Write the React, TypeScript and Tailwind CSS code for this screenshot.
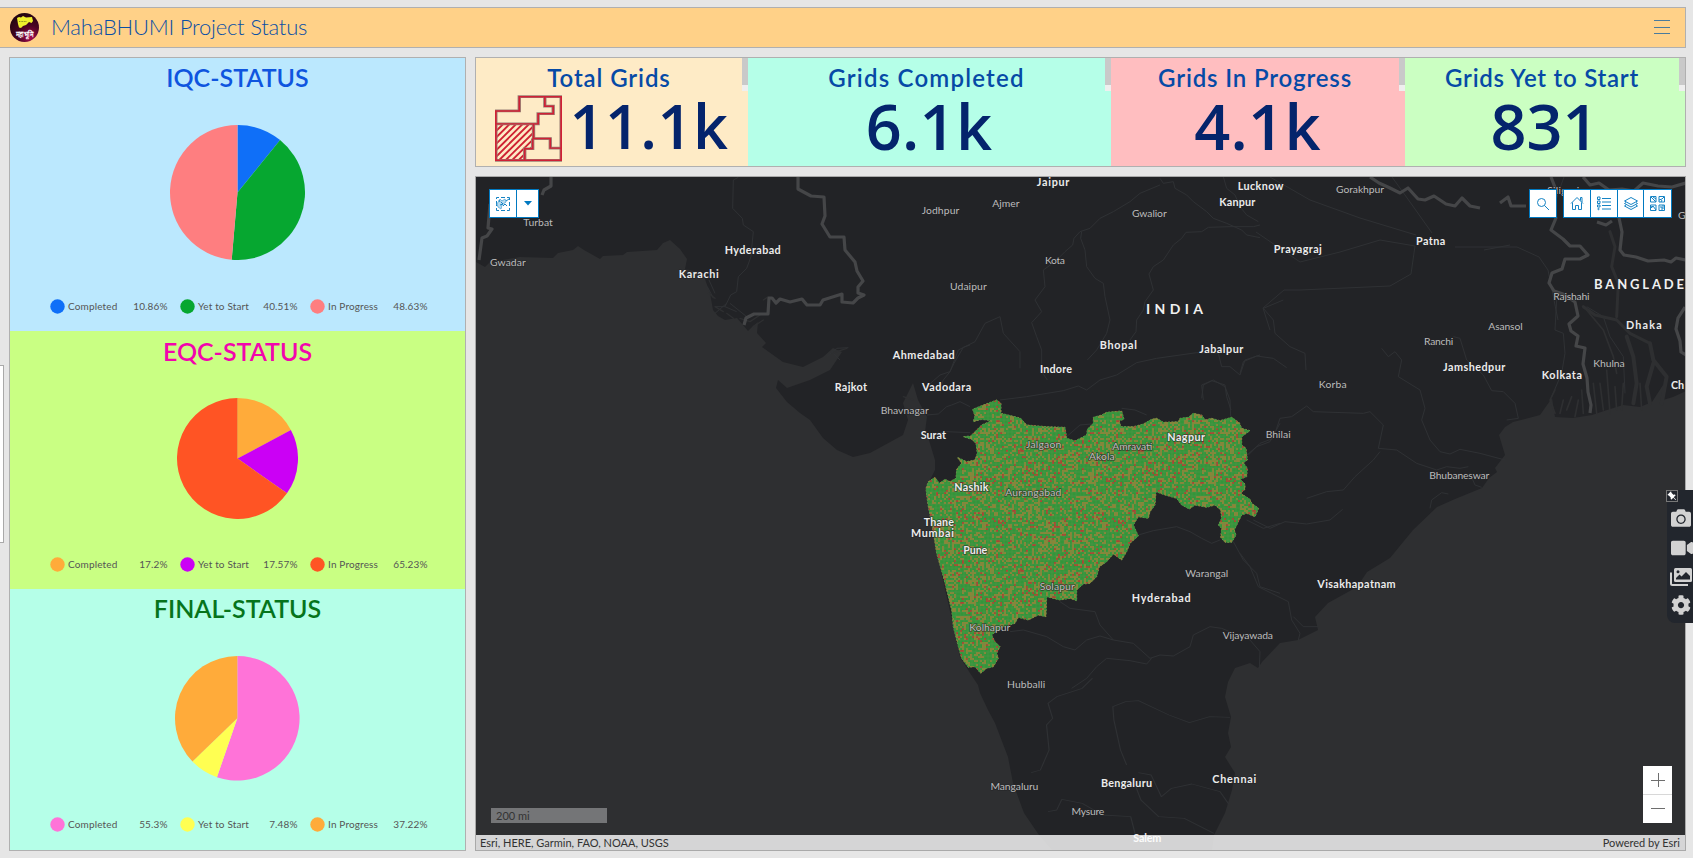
import React from "react";
import { FaCamera, FaVideo, FaCog } from "react-icons/fa";
import { BsPinAngleFill } from "react-icons/bs";

type Slice = { label: string; value: number; color: string };

function Pie({ slices, radius }: { slices: Slice[]; radius: number }) {
  let acc = 0;
  const point = (p: number) => {
    const a = (p / 100) * Math.PI * 2;
    return `${100 + 100 * Math.sin(a)} ${100 - 100 * Math.cos(a)}`;
  };
  return (
    <svg width={radius * 2} height={radius * 2} viewBox="0 0 200 200">
      {slices.map((s) => {
        const from = acc;
        acc += s.value;
        return (
          <path
            key={s.label}
            fill={s.color}
            d={`M100 100L${point(from)}A100 100 0 ${s.value > 50 ? 1 : 0} 1 ${point(acc)}Z`}
          />
        );
      })}
    </svg>
  );
}

function StatusPanel(props: {
  title: string;
  className: string;
  titleClass: string;
  slices: Slice[];
  radius: number;
}) {
  return (
    <section className={"flex flex-col items-center " + props.className}>
      <h2 className={"shrink-0 text-[25px] font-semibold whitespace-nowrap " + props.titleClass}>
        {props.title}
      </h2>
      <div className="flex min-h-0 flex-1 items-center justify-center">
        <Pie slices={props.slices} radius={props.radius} />
      </div>
      <ul className="ml-[2px] flex h-5 w-[378px] items-center gap-3 text-[10px] text-[#555]">
        {props.slices.map((s) => (
          <li key={s.label} className="flex w-[118px] shrink-0 items-center">
            <svg width="15" height="15" viewBox="0 0 15 15">
              <circle cx="7.5" cy="7.5" r="7.2" fill={s.color} />
            </svg>
            <span className="mt-px ml-[3.5px] flex-1 tracking-[0.15px] whitespace-nowrap">{s.label}</span>
            <span className="mt-px tracking-[0.1px] whitespace-nowrap">{s.value}%</span>
          </li>
        ))}
      </ul>
    </section>
  );
}

const HATCH = Array.from({ length: 13 }, (_, i) => `M${-86 + i * 15.5} 195l92 -112`).join("");
const PARCELS = "M58 5H158V192H2V47H58ZM119 5V33H139V55H103V85H2M92 85V128H132V156H158M90 128V158H71V192";

function ParcelIcon() {
  return (
    <svg width="67" height="67" viewBox="0 0 160 197" preserveAspectRatio="none" fill="none">
      <defs>
        <clipPath id="hatch">
          <path d="M4 85H92V130H88V158H70V193H4Z" />
        </clipPath>
      </defs>
      <path clipPath="url(#hatch)" stroke="#cf2233" strokeWidth="5" d={HATCH} />
      <path stroke="#9a8176" strokeWidth="8" d={PARCELS} />
      <path stroke="#d02035" strokeWidth="4" d={PARCELS} />
    </svg>
  );
}

function Indicator(props: {
  title: string;
  value: string;
  className: string;
  titleClass: string;
  valueClass: string;
  icon?: boolean;
}) {
  return (
    <div className={"relative flex flex-col items-center " + props.className}>
      <div className={"h-[37px] pr-[6px] text-[24px] leading-[39px] font-semibold whitespace-nowrap text-[#064aa6] " + props.titleClass}>
        {props.title}
      </div>
      <div className="flex h-[66px] items-center pr-px">
        {props.icon && <ParcelIcon />}
        <span className={"mb-1 font-['Open_Sans',sans-serif] leading-[60px] font-semibold whitespace-nowrap text-[#04246c] " + props.valueClass}>
          {props.value}
        </span>
      </div>
      <div className="absolute top-0 right-0 flex h-[33px] w-1.5 flex-col bg-[#efefef]">
        <div className="h-[27px] bg-[#c9c9c9]" />
      </div>
    </div>
  );
}

type Label = [string, number, number, number, number?];

const LABELS: Label[] = [
  ["Turbat", 523.3, 29.5, 225.3],
  ["Gwadar", 490, 35.7, 265.3],
  ["Hyderabad", 724.7, 56, 253.7, 1],
  ["Karachi", 678.7, 40, 277, 1],
  ["Jodhpur", 921.7, 37.6, 213.7],
  ["Ahmedabad", 892.7, 62, 358.3, 1],
  ["Rajkot", 834.7, 32.3, 390, 1],
  ["Vadodara", 922, 49.3, 389.8, 1],
  ["Bhavnagar", 880.7, 48, 413.3],
  ["Surat", 920.7, 25.3, 438, 1],
  ["Jaipur", 1036.7, 32.7, 185, 1],
  ["Ajmer", 992.3, 27.3, 206],
  ["Gwalior", 1132, 34.7, 216.3],
  ["Kanpur", 1219.3, 36, 205.7, 1],
  ["Kota", 1045, 20, 263.7],
  ["Udaipur", 950, 36.7, 289.7],
  ["Bhopal", 1099.7, 37.3, 348, 1],
  ["Jabalpur", 1199.3, 44, 352.3, 1],
  ["Indore", 1040, 32, 372, 1],
  ["Lucknow", 1237.7, 45.8, 189, 1],
  ["Gorakhpur", 1336, 48, 192],
  ["Prayagraj", 1273.8, 48, 252, 1],
  ["Patna", 1416, 29.3, 244.3, 1],
  ["Siliguri", 1547.3, 32, 193],
  ["G", 1678, 7, 218.5],
  ["Rajshahi", 1553.3, 36.3, 299],
  ["Dhaka", 1626, 35.7, 328.3, 1],
  ["Asansol", 1488.3, 34.3, 329.5],
  ["Ranchi", 1424, 29.3, 344],
  ["Jamshedpur", 1443, 62.3, 370, 1],
  ["Kolkata", 1541.7, 40.3, 378.7, 1],
  ["Khulna", 1593.3, 31.3, 366],
  ["Ch", 1671, 13, 388.7, 1],
  ["Korba", 1318.7, 28, 387.7],
  ["Bhilai", 1265.7, 25, 437.7],
  ["Bhubaneswar", 1429.3, 60, 478.3],
  ["Visakhapatnam", 1317.3, 78.3, 587.7, 1],
  ["Jalgaon", 1026, 35.3, 447],
  ["Akola", 1089, 25.7, 459.3],
  ["Amravati", 1112.3, 40, 449.7],
  ["Nagpur", 1167.3, 37.7, 440.5, 1],
  ["Nashik", 954.3, 34.3, 490, 1],
  ["Aurangabad", 1005.3, 56, 495.3],
  ["Thane", 923.7, 30.3, 525, 1],
  ["Mumbai", 911, 43, 536, 1],
  ["Pune", 963.3, 24, 553, 1],
  ["Solapur", 1039.7, 35, 589.7],
  ["Kolhapur", 969.3, 41, 630.3],
  ["Hyderabad", 1131.7, 59, 601.2, 1],
  ["Warangal", 1185.3, 43, 576.7],
  ["Vijayawada", 1222.7, 50.3, 638.7],
  ["Hubballi", 1007, 38.3, 687.3],
  ["Mangaluru", 990.4, 48, 789.5],
  ["Bengaluru", 1101, 51, 786.7, 1],
  ["Chennai", 1212.3, 43.9, 782.3, 1],
  ["Mysure", 1071.5, 32.7, 814],
  ["Salem", 1133.3, 28, 841.5, 1],
];

/* Survey grid cells: a repeating tile of 2px squares, coloured by status. */
const TILE = 60;
const CELL = 2;
function buildTile() {
  let seed = 20417;
  const rand = () => {
    seed = (seed * 1103515245 + 12345) % 2147483648;
    return seed / 2147483648;
  };
  let amber = "";
  let red = "";
  for (let y = 0; y < TILE; y++) {
    for (let x = 0; x < TILE; x++) {
      const v = rand();
      const cell = `M${x * CELL} ${y * CELL}h${CELL}v${CELL}h-${CELL}z`;
      if (v < 0.075) red += cell;
      else if (v < 0.4) amber += cell;
    }
  }
  return { amber, red };
}
const tile = buildTile();

const STATE =
  "80,345 78,325 85,305 105,292 118,310 135,298 150,305 168,295 170,268 185,250 172,232 200,245 225,240 232,220 228,190 215,178 190,170 212,168 230,150 245,135 275,122 245,118 220,125 225,108 218,88 250,75 290,60 303,70 303,100 345,110 362,115 380,135 440,140 495,142 500,175 525,183 560,165 562,148 580,130 580,112 605,105 620,97 665,93 672,118 658,122 662,140 700,140 730,132 755,118 770,115 790,127 835,125 840,115 865,112 880,100 905,105 915,120 935,115 960,122 995,112 1018,128 1025,145 1050,152 1025,170 1025,195 1038,205 1042,240 1030,248 1042,265 1040,290 1020,298 1035,312 1035,328 1022,340 1050,358 1055,370 1076,385 1065,410 1040,400 1025,405 1003,450 1008,465 995,487 975,487 962,472 965,445 955,435 965,415 962,390 945,375 920,382 885,375 868,387 845,375 830,355 795,345 768,335 765,375 750,395 745,415 715,410 700,435 715,468 690,490 680,515 665,540 640,522 620,545 598,560 590,590 570,610 550,612 530,630 530,662 510,655 480,660 440,650 438,710 415,705 385,720 355,712 345,730 300,745 275,765 285,785 300,800 290,820 295,835 280,860 260,865 242,880 225,860 205,862 185,835 175,800 160,740 155,690 145,650 130,590 110,520 102,470 95,430 85,380";

const WEST_SEA =
  "476,262 485,267 490,262 520,257 553,258 558,253 573,250 578,246 584,250 600,259 603,256 623,255 627,252 657,250 663,243 670,240 680,249 687,259 685,269 703,273 706,282 710,293 713,310 718,316 725,320 737,318 743,325 748,331 753,326 758,322 757,333 766,343 762,347 783,362 803,367 823,357 833,348 842,352 830,370 810,380 787,388 778,380 776,388 787,402 800,413 810,420 823,438 837,450 853,457 870,453 903,435 908,420 903,403 913,383 918,400 927,417 925,432 928,437 935,460 935,470 930,480 927,490 930,513 935,540 943,580 952,620 960,657 970,673 978,685 980,693 988,710 995,723 1008,757 1013,783 1024,813 1039,835 1052,850 476,850";

const EAST_SEA =
  "1212,850 1214,835 1225,813 1232,790 1235,773 1225,757 1231,747 1228,733 1231,717 1225,697 1228,682 1235,668 1250,663 1258,668 1262,662 1280,643 1298,640 1318,630 1315,617 1328,603 1357,587 1367,572 1390,558 1413,530 1437,507 1455,499 1482,488 1489,478 1497,472 1495,468 1505,455 1499,435 1505,427 1513,422 1540,415 1552,398 1555,417 1573,418 1592,415 1607,410 1623,405 1640,407 1652,402 1663,385 1663,400 1673,397 1686,391 1686,850";

function MapCanvas() {
  return (
    <svg className="block" width="1209" height="673" viewBox="476 177 1209 673" fill="none">
      <defs>
        <pattern id="cells" width="120" height="120" patternUnits="userSpaceOnUse">
          <rect width="120" height="120" fill="#33963a" />
          <path d={tile.amber} fill="#8c8538" />
          <path d={tile.red} fill="#ac4432" />
          <path
            d={Array.from({ length: 30 }, (_, i) => `M0 ${i * 4}H120M${i * 4} 0V120`).join("")}
            stroke="#5f8f4c"
            strokeWidth="0.6"
            opacity="0.6"
          />
        </pattern>
      </defs>
      <rect x="476" y="177" width="1209" height="673" fill="#222326" />
      <polygon points={WEST_SEA} fill="#2e2f31" />
      <polygon points={EAST_SEA} fill="#2e2f31" />

      {/* Rivers */}
      <g stroke="#2f3134" strokeWidth="1" strokeLinejoin="round">
        <g transform="translate(470 170) scale(.33333)" strokeWidth="3">
          <path d="M805 22L790 30L788 115L817 145L820 165L850 185L845 235L843 260L830 295L805 320L800 365L782 375L765 410L735 410M765 410L800 425M717 330L735 370M712 350L730 385M780 400L830 440M735 430L770 400" />
          <path d="M1500 525L1480 532L1452 580L1440 605L1420 630L1410 655" />
          <path d="M1370 735L1405 732L1430 710L1445 705L1470 695L1500 710" />
          <path d="M1375 795L1430 785L1500 788M1070 560L1100 535L1135 533M1085 545L1110 570" />
        </g>
        <g transform="translate(930 170) scale(.33333)" strokeWidth="3">
          <path d="M690 25L700 40L730 35L735 55L770 75L790 95L830 125L850 145L890 160L935 180L950 195L990 203" />
          <path d="M880 20L890 55L915 75L930 110L950 135L985 155" />
          <path d="M690 45L630 70L600 95L550 125L510 145L480 175L450 185L432 205L428 225L405 245L375 275L340 300L345 350L315 390L335 425L305 458L320 500L335 540L335 605L352 630" />
          <path d="M455 185L452 205L465 240L470 290L495 325L520 340L525 380L540 450L530 490L500 540L472 570" />
          <path d="M990 165L970 170L900 170L835 172L815 185L768 187L755 205L730 225L700 270L670 290L657 312L670 360L645 395L640 420L620 450L618 485L600 510" />
          <path d="M-10 650L30 615L60 605L85 540L135 515L165 460L210 440L220 490L270 545L270 595" />
          <path d="M210 690L290 680L400 662L445 648L470 660L510 630L560 615L620 578L680 565L800 548L865 550L875 590L900 590L930 615L945 570L990 555" />
          <path d="M820 690L815 645L845 632L885 645L890 680L903 720" />
        </g>
        <g transform="translate(1240 300) scale(.33333)" strokeWidth="3">
          <path d="M130 0L70 25L100 60L105 100L150 140L195 160L198 210M0 220L10 185L50 168L100 175L140 203" />
          <path d="M425 145L445 170L465 155L485 180L475 230L540 270L555 325L545 360L570 420L600 455L630 462L660 448L720 460L795 480" />
          <path d="M25 465L60 430L100 415L120 355L155 350L200 318L220 335L370 340L390 335L430 375L415 445L470 450L530 490L590 510L620 500L660 505L685 500" />
          <path d="M200 595L260 575L310 570L345 530L400 480L420 455" />
          <path d="M40 660L90 685L135 665L200 672L270 660L308 628M690 520L705 555L725 562M570 625L575 600L605 578L625 582" />
          <path d="M640 110L660 115L680 180L730 225L755 272L790 275L825 310L835 355L800 360" />
          <path d="M0 760L30 800L55 860L95 880L145 905L155 960L180 1000L175 1020M160 950L190 980L235 980" />
          <path d="M950 0L945 90L970 100L975 160L965 220L935 290M1090 50L1110 110L1150 170L1155 280M1040 20L1090 50L1130 60L1130 0" />
        </g>
        <g transform="translate(900 380) scale(.33333)" strokeWidth="3">
          <path d="M235 120L280 120M500 170L540 135L575 132M665 85L705 90L740 105" />
          <path d="M715 465L760 452L830 440L870 455L905 475L935 490L960 480M1000 485L1030 540L1070 580L1080 620L1140 640M1040 420L1090 445L1140 430" />
          <path d="M480 665L510 685L585 695L600 735L640 780L700 790L750 835L780 825L820 828L870 800L880 765L930 740L965 745L1050 780L1080 815L1078 865" />
          <path d="M330 755L370 750L440 770L490 800L525 810L560 780L600 768L640 780" />
          <path d="M515 925L560 895L590 860L620 835L690 842L740 852L755 835" />
          <path d="M905 55L910 15L940 0L975 20L990 60L992 110M1035 230L1070 200L1110 185L1140 130" />
        </g>
        <g transform="translate(470 640) scale(.5102 .33333)" strokeWidth="2.4">
          <path d="M1220 115L1200 145L1150 170L1133 190L1142 235L1130 255L1135 330L1118 390L1100 398" />
          <path d="M1287 375L1275 330L1262 240L1260 200L1285 185L1310 182L1370 225L1410 248L1450 230L1490 232" />
          <path d="M1133 515L1150 510L1160 478L1200 490L1240 525L1295 530L1305 590L1300 610M1310 398L1335 405L1355 470L1375 445L1415 432L1470 455L1487 492M1305 440L1315 480L1350 530L1400 535L1458 580" />
        </g>
        <path d="M1564 177L1560 188L1556 200M1517 247L1539 257L1548 270L1554 300L1558 320M1484 250L1510 245M1455 247L1517 247M1411 274L1390 286L1300 290L1284 290L1263 308L1270 330M1411 274L1415 246L1380 240L1340 252L1300 262L1256 232M1416 235L1360 218L1310 200L1270 177M1392 177L1405 195L1432 233" />
      </g>

      {/* Delta channels */}
      <g stroke="#2e2f31" strokeLinecap="round" strokeLinejoin="round">
        <g transform="translate(1500 170) scale(.33333)" strokeWidth="5">
          <path d="M330 185L345 230L335 290L355 340L350 440M250 410L285 435L350 450L390 490L450 520" strokeWidth="9" />
          <path d="M450 520L460 570L500 620L485 700M460 580L440 650L450 700M380 500L400 560L410 640L400 700" strokeWidth="12" />
          <path d="M300 640L310 720M320 600L330 730M345 650L350 720M370 640L365 720M200 720L215 680M225 740L235 690M250 730L245 660M165 730L150 690L165 660M180 730L190 690M280 640L290 730M420 640L425 720M260 420L310 480L340 560L350 610" />
        </g>
        <g transform="translate(470 170) scale(.33333)" strokeWidth="4">
          <path d="M715 370L735 385M735 410L760 425M770 430L790 445M810 445L840 455L870 435M880 390L895 380M850 470L880 450M1330 690L1300 680M1085 550L1130 535" />
        </g>
      </g>

      {/* International borders */}
      <g strokeLinejoin="round" stroke="#454648" strokeWidth="3.2">
        <path d="M551 177V186L544 190L542 195M490 204L488 228L492 229L487 236L482 238L479 260M798 177V189L811 196L824 197L825 216L822 224L830 237L844 237L845 250L855 262L857 271L863 281L858 287L858 293L864 295L858 298L853 303L842 302L842 294L823 300L820 305L807 305L802 299L790 302L780 299L776 303L772 298L769 298L768 314H754L746 318L744 325" />
        <path d="M1370 177L1379 183L1390 188L1400 193L1408 188L1418 199L1425 200L1434 196L1446 204L1455 206L1462 198L1470 206L1480 208M1500 203L1508 197L1511 206L1526 206M1551 177L1556 190L1551 205L1556 218L1551 230L1563 239L1570 246L1580 246L1588 255L1580 259L1565 259L1562 269L1552 273L1549 283L1554 291L1563 294L1575 302L1578 316L1569 324L1571 331L1578 336L1576 346L1585 348L1583 364L1587 378L1588 392L1591 405L1590 413" />
        <path d="M1583 177L1590 185L1599 183L1609 190L1622 189L1634 191L1643 183L1658 186L1672 187L1686 183M1597 222L1606 225L1612 221M1619 218L1622 232L1620 250L1624 255L1636 257L1648 261L1664 260L1671 262L1676 258L1686 260M1685 307L1678 318L1676 329L1680 341L1681 352L1686 355" />
      </g>

      <g transform="translate(900 380) scale(.33333)">
        <polygon points={STATE} fill="#33963a" stroke="#7d8f4a" strokeWidth="3" strokeDasharray="6 4" />
      </g>
      <clipPath id="state">
        <polygon points={STATE} transform="translate(900 380) scale(.33333)" />
      </clipPath>
      <rect x="910" y="390" width="360" height="300" fill="url(#cells)" clipPath="url(#state)" />

      <g fontFamily="Lato, 'Open Sans', sans-serif">
        {LABELS.map(([name, x, w, y, major]) => (
          <text
            key={name + x}
            x={x}
            y={y + 0.7}
            textLength={w}
            fontSize={major ? 10.8 : 10.4}
            fontWeight={major ? 700 : 400}
            fill={major ? "#ececec" : "#bcbcbc"}
            stroke="#222326"
            strokeOpacity="0.6"
            strokeWidth="1.6"
            paintOrder="stroke"
          >
            {name}
          </text>
        ))}
        <text x="1146" y="313.7" textLength="57" fontSize="14" fontWeight="700" fill="#f0f0f0">
          INDIA
        </text>
        <text x="1594" y="288.5" textLength="90" fontSize="13" fontWeight="700" fill="#f0f0f0">
          BANGLADE
        </text>
      </g>
    </svg>
  );
}

function ToolButton({ children, className }: { children: React.ReactNode; className: string }) {
  return (
    <button className={"flex h-[29px] items-center justify-center border-[#0079c1] bg-white text-[#0079c1] " + className}>
      {children}
    </button>
  );
}

const line = { fill: "none", stroke: "#1583c4", strokeWidth: 1 } as const;

export default function App() {
  return (
    <div className="relative flex h-[858px] w-full flex-col overflow-hidden bg-[#e6e6e6] pt-[7px] font-[Lato,'Open_Sans',sans-serif]">
      <header className="mr-[7px] flex h-[41px] items-center border border-l-0 border-[#b0b0b0] bg-[#ffd188] pr-[15px] pl-[10px]">
        <svg width="29" height="29" viewBox="0 0 29 29">
          <defs>
            <radialGradient id="logo" cx="0.7" cy="0.85" r="0.85">
              <stop offset="0" stopColor="#a3094f" />
              <stop offset="0.5" stopColor="#4a0422" />
              <stop offset="1" stopColor="#250511" />
            </radialGradient>
          </defs>
          <circle cx="14.5" cy="14.5" r="14.5" fill="url(#logo)" />
          <path d="M7 5L9 4L11 4.500L13 3L16 4.500L22 4L23 8L21.500 10L19 9L16 12L13 13L11 15L9 14.500L8 11Z" fill="#eef02c" />
          <path d="M9 8.500H17" stroke="#8a8a20" strokeWidth="1" strokeDasharray="1 .6" />
          <text x="14.500" y="23.500" textAnchor="middle" fontSize="8" fontWeight="700" textLength="18" lengthAdjust="spacingAndGlyphs" fill="#fff">
            महाभूमि
          </text>
        </svg>
        <h1 className="mb-[2px] ml-3 flex-1 text-[22px] leading-8 font-light tracking-[-0.22px] whitespace-nowrap text-[#0a4fa5]">
          MahaBHUMI Project Status
        </h1>
        <svg width="16" height="15" viewBox="0 0 16 15" shapeRendering="crispEdges">
          <path d="M0 .5H16M0 7.500H16M0 13.500H16" stroke="#4a7b9c" />
        </svg>
      </header>

      <main className="flex h-[803px] gap-[9px] pt-[9px] pr-[7px] pl-[9px]">
        <aside className="flex w-[457px] flex-col border border-[#b0b0b0]">
          <StatusPanel
            title="IQC-STATUS"
            className="h-[273px] bg-[#bbe8fe] pb-[15px]"
            titleClass="h-[31px] leading-[38px] text-[#0f55df]"
            radius={67.5}
            slices={[
              { label: "Completed", value: 10.86, color: "#0f6ff8" },
              { label: "Yet to Start", value: 40.51, color: "#06a730" },
              { label: "In Progress", value: 48.63, color: "#fe7e80" },
            ]}
          />
          <StatusPanel
            title="EQC-STATUS"
            className="h-[258px] bg-[#c9ff83] pb-[15px]"
            titleClass="h-[32px] leading-[40px] text-[#f205ad]"
            radius={60.5}
            slices={[
              { label: "Completed", value: 17.2, color: "#ffab3a" },
              { label: "Yet to Start", value: 17.57, color: "#cb00f5" },
              { label: "In Progress", value: 65.23, color: "#ff5424" },
            ]}
          />
          <StatusPanel
            title="FINAL-STATUS"
            className="flex-1 bg-[#b5ffe8] pb-[16px]"
            titleClass="h-[34px] leading-[38px] text-[#06741b]"
            radius={62.3}
            slices={[
              { label: "Completed", value: 55.3, color: "#ff73d8" },
              { label: "Yet to Start", value: 7.48, color: "#ffff52" },
              { label: "In Progress", value: 37.22, color: "#ffab3a" },
            ]}
          />
        </aside>

        <div className="flex flex-1 flex-col gap-[9px]">
          <section className="flex h-[110px] border border-[#b0b0b0]">
            <Indicator title="Total Grids" value="11.1k" icon className="w-[272px] bg-[#feebc6]" titleClass="tracking-[0.9px]" valueClass="ml-2 text-[61px] tracking-[0.5px]" />
            <Indicator title="Grids Completed" value="6.1k" className="w-[363px] bg-[#b5ffe8]" titleClass="tracking-[1.2px]" valueClass="text-[63px] tracking-[0.3px]" />
            <Indicator title="Grids In Progress" value="4.1k" className="w-[294px] bg-[#ffbec0]" titleClass="tracking-[0.85px]" valueClass="text-[63px] tracking-[0.3px]" />
            <Indicator title="Grids Yet to Start" value="831" className="flex-1 bg-[#cbffc2]" titleClass="tracking-[0.75px]" valueClass="text-[63px]" />
          </section>

          <section className="relative flex-1 overflow-hidden border border-[#a9a9a9]">
            <MapCanvas />
            <div className="absolute top-[12px] left-[13px] flex">
              <ToolButton className="w-7 border">
                <svg width="16" height="16" viewBox="0 0 16 16" {...line}>
                  <path d="M1.500 3V1.500H4M6 1.500H10M12 1.500H14.500V4M14.500 6V10M14.500 12V14.500H12M10 14.500H6M4 14.500H1.500V12M1.500 10V5" />
                  <path d="M2 8L5 3L7 5L10 3L11 6L7 9L6 13L3 11Z" fill="#b8dbef" stroke="#6fb4dd" />
                  <path d="M6 6L8 8L5 9M4 4L5 6M8 10L10 8L12 10M11 5L14 3" />
                </svg>
              </ToolButton>
              <ToolButton className="w-[22px] border border-l-0">
                <svg width="8" height="5" viewBox="0 0 8 5">
                  <path d="M0 0H8L4 4.500Z" fill="#0079c1" />
                </svg>
              </ToolButton>
            </div>

            <div className="absolute top-[12px] right-[13px] flex">
              <ToolButton className="mr-[6px] w-7 border">
                <svg width="14" height="14" viewBox="0 0 14 14" {...line}>
                  <circle cx="5.500" cy="5.500" r="4" />
                  <path d="M8.500 8.500L13 13" />
                </svg>
              </ToolButton>
              <ToolButton className="w-7 border">
                <svg width="14" height="15" viewBox="0 0 14 15" {...line}>
                  <path d="M1 7.500L7 1.500L13 7.500M10.500 4.500V1.500H12V6M2.500 6.500V13.500H5.500V9.500H8.500V13.500H11.500V6.500" />
                </svg>
              </ToolButton>
              <ToolButton className="w-[27px] border border-l-0">
                <svg width="14" height="15" viewBox="0 0 14 15" {...line}>
                  <path d="M5 2.500H14M5 6H14M5 9.500H14M5 13H14" />
                  <path d="M.500 1H3V3.500H.500ZM.500 5H3V7.500H.500ZM.500 9H3V11H.500Z" />
                  <circle cx="1.500" cy="13" r=".7" />
                </svg>
              </ToolButton>
              <ToolButton className="w-[26px] border border-l-0">
                <svg width="14" height="15" viewBox="0 0 14 15" {...line}>
                  <path d="M7 1.500L13.500 5L7 8.500L.500 5ZM2 6.500L.500 7.500L7 11L13.500 7.500L12 6.500M2 9L.500 10L7 13.500L13.500 10L12 9" />
                </svg>
              </ToolButton>
              <ToolButton className="w-7 border border-l-0">
                <svg width="15" height="15" viewBox="0 0 15 15" {...line}>
                  <path d="M.500 .500H6V6H.500ZM9 .500H14.500V6H9ZM.500 9H6V14.500H.500ZM9 9H14.500V14.500H9Z" />
                  <path d="M1 1L6 6M3 1L6 3M9 4L12 3L14 1M11 6L12 4M1 12L3 10L6 14M1 10L2 12M10 11H12V14M13 9V13" />
                </svg>
              </ToolButton>
            </div>

            <div className="absolute bottom-[27px] left-[15px] h-[15px] w-[116px] bg-[#747577] pl-[5px] text-[11px] leading-[15px] text-[#333]">
              200 mi
            </div>

            <div className="absolute right-[13px] bottom-[27px] flex w-[29px] flex-col">
              <div className="flex h-7 items-center justify-center bg-white">
                <svg width="14" height="14" viewBox="0 0 14 14" stroke="#6e6e6e">
                  <path d="M0 7.500H14M7.500 0V14" />
                </svg>
              </div>
              <div className="flex h-[29px] items-center justify-center border-t border-[#d8d8d8] bg-white">
                <svg width="14" height="14" viewBox="0 0 14 14" stroke="#6e6e6e">
                  <path d="M0 6.500H14" />
                </svg>
              </div>
            </div>

            <div className="absolute inset-x-0 bottom-0 flex h-[15px] items-center justify-between bg-white/80 pr-[5px] pl-1 text-[11px] leading-[15px] text-[#323232]">
              <span>Esri, HERE, Garmin, FAO, NOAA, USGS</span>
              <span>Powered by Esri</span>
            </div>
          </section>
        </div>
      </main>

      <div className="absolute top-[365px] left-0 h-[178px] w-1 border border-l-0 border-[#a9a9a9] bg-white" />

      <div className="absolute top-[490px] right-0 flex h-[133px] w-[26px] flex-col items-center gap-[9px] rounded-bl-lg bg-[#22262d] pt-[18px] pl-[2px] text-[#d2d2d2]">
        <FaCamera size={20} className="shrink-0" />
        <FaVideo size={22} className="-mr-0.5 shrink-0" />
        <svg width="22" height="18" viewBox="0 0 22 18" className="shrink-0">
          <path d="M1 4.500V15.500Q1 17 2.500 17H18" fill="none" stroke="#d2d2d2" strokeWidth="2" />
          <rect x="4" y="0" width="18" height="14" rx="1.500" fill="#d2d2d2" />
          <path d="M6 11.500V10L9.500 6.500L11.500 8.500L16 4L20 8V11.500Z" fill="#22262d" />
          <circle cx="8" cy="3.700" r="1.500" fill="#22262d" />
        </svg>
        <FaCog size={20} className="shrink-0" />
        <div className="absolute top-0 -left-px flex size-3 items-center justify-center border border-[#777] text-white">
          <BsPinAngleFill size={10} className="shrink-0 -scale-x-100" />
        </div>
      </div>
    </div>
  );
}
